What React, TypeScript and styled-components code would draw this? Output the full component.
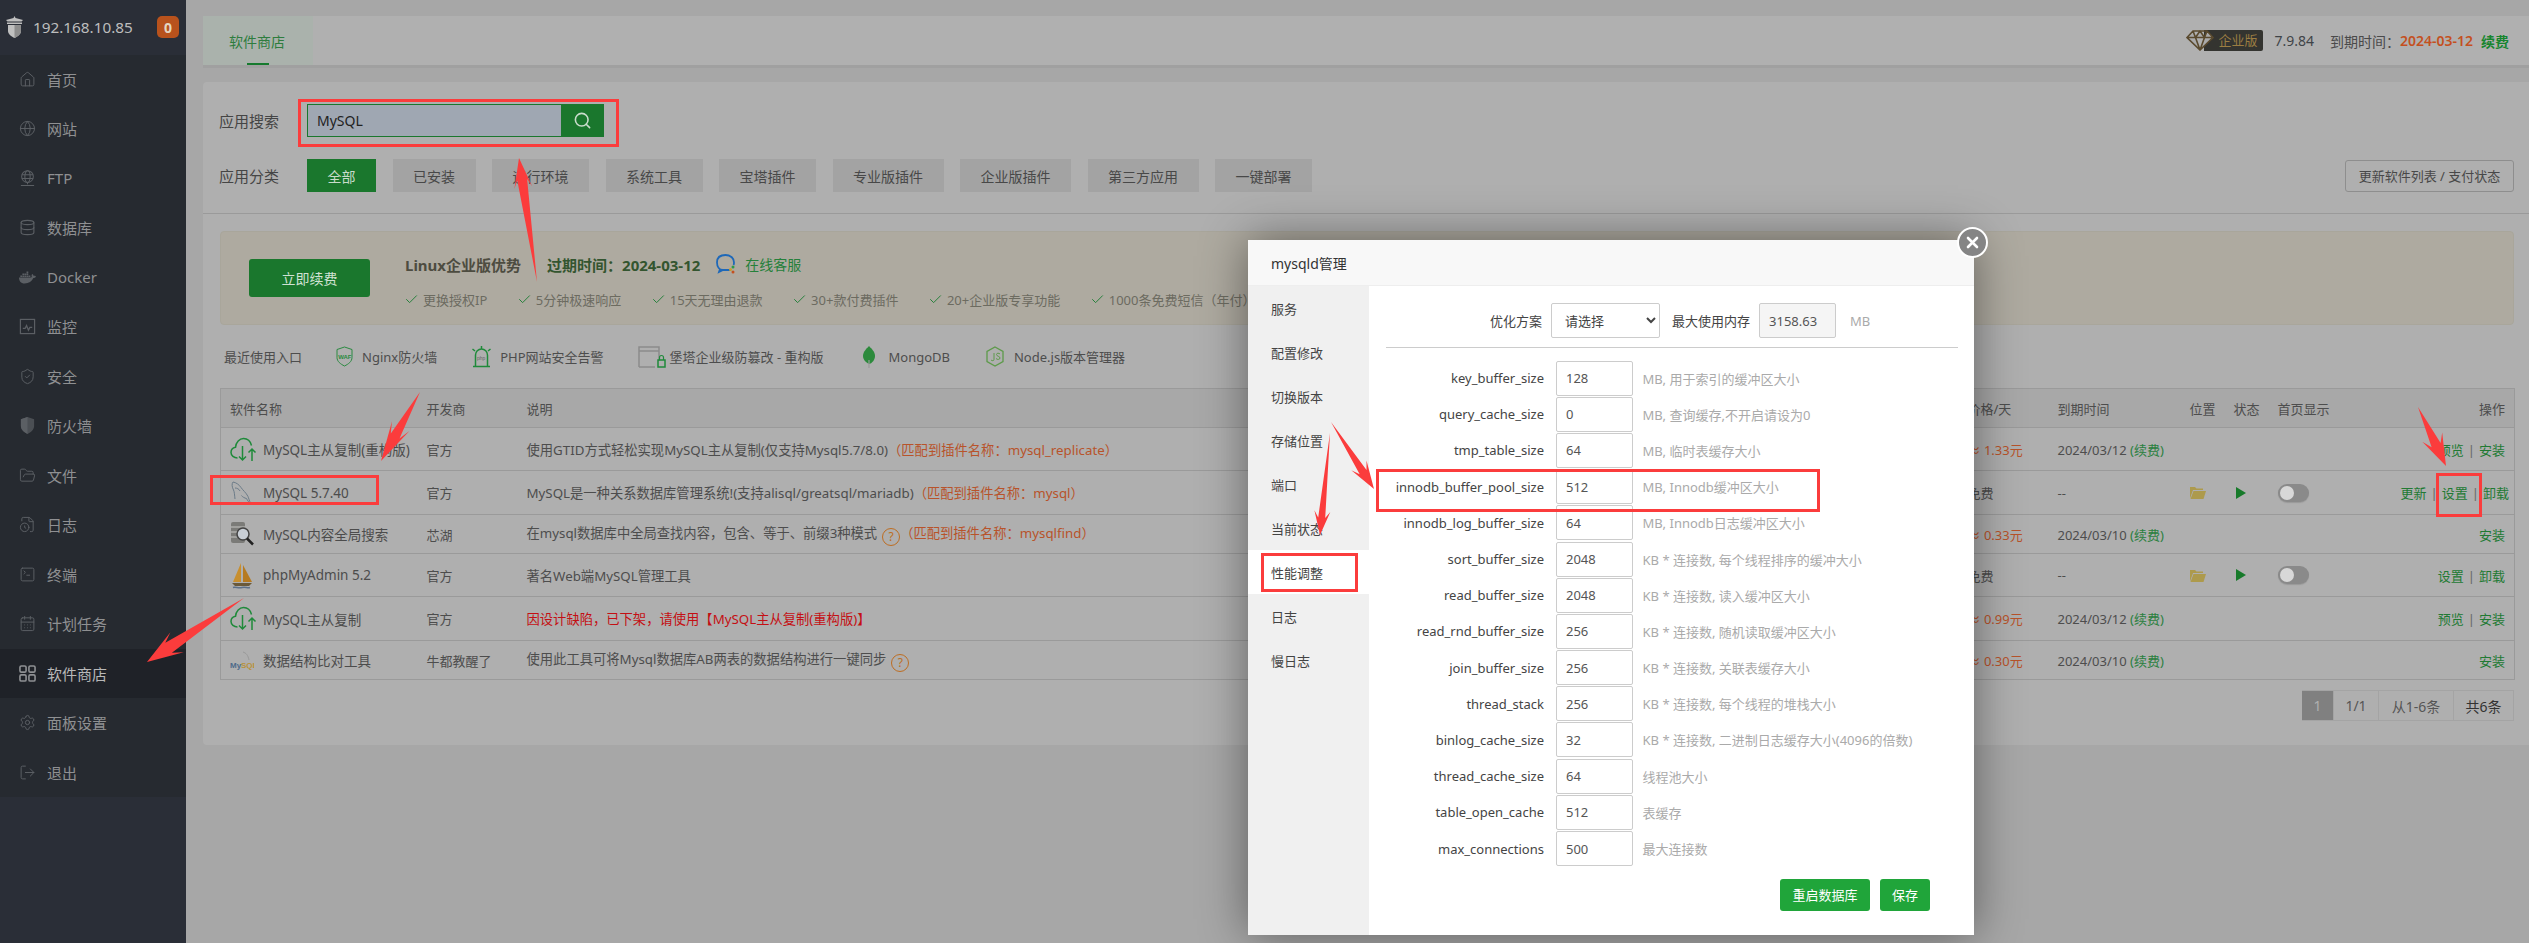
import React from "react";
import styled, { createGlobalStyle } from "styled-components";
import {
  House, Globe, Database, ShieldCheck, FolderOpen, SquareTerminal, CalendarDays,
  Settings, LogOut, Search, Check, FileClock,
} from "lucide-react";
import { FaDocker } from "react-icons/fa";

const COMMA = "\uFF0C";
const COLON = "\uFF1A";
const LP = "\uFF08";
const RP = "\uFF09";

const Global = createGlobalStyle`
  html, body { margin: 0; padding: 0; width: 2529px; height: 943px; overflow: hidden; background: #a7a7a7; }
  * { box-sizing: border-box; }
  body {
    font-family: "Noto Sans", "Noto Sans CJK SC", "Liberation Sans", sans-serif;
    font-size: 13px;
    color: #4a4a4a;
    text-spacing-trim: space-all;
  }
`;

const Page = styled.div`
  position: relative;
  width: 2529px;
  height: 943px;
  display: flex;
  overflow: hidden;
  background: #a7a7a7;
`;

/* ---------- sidebar ---------- */
const Sidebar = styled.aside`
  width: 186px;
  flex: none;
  background: #2a2e37;
`;
const SideHead = styled.div`
  height: 54.5px;
  padding-left: 5px;
  display: flex;
  align-items: center;
  color: #bdbdbd;
  font-size: 15.300px;
`;
const HeadIp = styled.span`
  margin-left: 9px;
  width: 124px;
  white-space: nowrap;
`;
const HeadBadge = styled.span`
  width: 22px;
  height: 22px;
  border-radius: 5px;
  background: #b8521c;
  color: #e4d6c0;
  font-weight: 700;
  font-size: 14px;
  display: flex;
  align-items: center;
  justify-content: center;
`;
const NavList = styled.nav`
  background: #262a30;
`;
const NavItem = styled.div<{ $active?: boolean }>`
  height: 49.5px;
  padding-left: 19px;
  display: flex;
  align-items: center;
  gap: 11px;
  font-size: 15px;
  color: ${(p) => (p.$active ? "#b8b8b8" : "#8f9092")};
  background: ${(p) => (p.$active ? "#1f2228" : "transparent")};
  svg { width: 17px; height: 17px; flex: none; color: ${(p) => (p.$active ? "#8e9093" : "#5b5f64")}; }
`;

/* ---------- main ---------- */
const Main = styled.main`
  flex: 1;
  min-width: 0;
  padding: 16px 0 0 17px;
`;
const TabBar = styled.header`
  height: 49px;
  background: #b0b0b0;
  border-radius: 4px 0 0 0;
  box-shadow: 0 3px 0 #a0a0a0;
  display: flex;
  align-items: stretch;
  justify-content: space-between;
`;
const Tab = styled.div`
  position: relative;
  width: 110px;
  background: #aab2ac;
  color: #2e7d3e;
  font-size: 14px;
  display: flex;
  align-items: center;
  justify-content: center;
  padding-right: 2px;
  &::after {
    content: "";
    position: absolute;
    left: 44px;
    bottom: 0;
    width: 22px;
    height: 2px;
    background: #167a2e;
  }
`;
const VersionBox = styled.div`
  display: flex;
  align-items: center;
  padding-right: 20px;
  font-size: 14px;
  color: #4a4a4a;
`;
const EditionBadge = styled.span`
  display: flex;
  align-items: center;
  margin-right: 11px;
`;
const EditionText = styled.span`
  height: 21px;
  width: 59px;
  margin-left: -10px;
  padding-left: 14px;
  background: #343430;
  color: #9b7d42;
  font-size: 13px;
  line-height: 21px;
  white-space: nowrap;
  border-radius: 0 2px 2px 0;
`;
const Version = styled.span`
  color: #3f4448;
  margin-right: 16px;
`;
const ExpireDate = styled.strong`
  color: #c4501f;
  font-weight: 600;
  margin-right: 8px;
`;
const RenewLink = styled.span`
  color: #17852f;
  font-weight: 600;
`;

const Card = styled.section`
  margin-top: 17px;
  height: 663px;
  background: #afafaf;
  border-radius: 4px 0 0 4px;
`;
const Filters = styled.div`
  height: 132px;
  padding: 22px 15px 0 16px;
  border-bottom: 1px solid #9a9a9a;
  display: flex;
  flex-direction: column;
  gap: 22px;
`;
const FilterRow = styled.div`
  height: 33px;
  display: flex;
  align-items: center;
`;
const FilterLabel = styled.label`
  width: 88px;
  flex: none;
  font-size: 15px;
  color: #454545;
`;
const SearchBox = styled.div`
  display: flex;
  width: 297px;
  height: 33px;
`;
const SearchInput = styled.input`
  flex: 1;
  min-width: 0;
  border: 1.5px solid #1a772d;
  border-right: 0;
  background: #9fa7b2;
  padding: 0 9px;
  font: inherit;
  font-size: 14px;
  color: #222;
  outline: none;
`;
const SearchButton = styled.button`
  width: 43px;
  border: 0;
  padding: 0;
  background: #1a772d;
  color: #c9dccc;
  display: flex;
  align-items: center;
  justify-content: center;
`;
const CatList = styled.div`
  display: flex;
  gap: 16.5px;
  flex: 1;
`;
const CatButton = styled.button<{ $active?: boolean }>`
  height: 33px;
  padding: 0 20.5px;
  border: 0;
  font: inherit;
  font-size: 14px;
  white-space: nowrap;
  background: ${(p) => (p.$active ? "#1a772d" : "#a3a3a3")};
  color: ${(p) => (p.$active ? "#c8dccb" : "#484848")};
`;
const RefreshButton = styled.button`
  width: 169px;
  height: 32px;
  padding: 0;
  border: 1px solid #8e8e8e;
  border-radius: 3px;
  background: transparent;
  font: inherit;
  font-size: 13px;
  color: #484848;
  white-space: nowrap;
`;
const Content = styled.div`
  padding: 17px 15px 0 17px;
`;
const Banner = styled.div`
  height: 94px;
  padding-left: 28px;
  border: 1px solid #a9a69b;
  border-radius: 4px;
  background: #aeaaa0;
  display: flex;
  align-items: center;
  gap: 34px;
`;
const RenewButton = styled.div`
  width: 121px;
  height: 38px;
  border-radius: 3px;
  background: #1a772d;
  color: #d0e2d3;
  font-size: 14px;
  display: flex;
  align-items: center;
  justify-content: center;
`;
const BannerBody = styled.div`
  display: flex;
  flex-direction: column;
  gap: 15px;
  margin-top: 7px;
`;
const BannerTitle = styled.div`
  height: 20px;
  padding-left: 1px;
  display: flex;
  align-items: center;
  font-size: 15px;
  font-weight: 700;
  color: #4d4c40;
`;
const ExpireTitle = styled.span`
  margin: 0 16px 0 26px;
  color: #33552f;
`;
const OnlineLink = styled.span`
  margin-left: 8px;
  font-size: 14px;
  font-weight: 400;
  color: #25803a;
`;
const Features = styled.div`
  display: flex;
  gap: 29.5px;
  height: 20px;
`;
const Feature = styled.span`
  display: flex;
  align-items: center;
  gap: 4px;
  font-size: 13px;
  color: #6c6b60;
  white-space: nowrap;
  svg { color: #27803c; width: 15px; height: 15px; flex: none; }
`;
const QuickRow = styled.div`
  height: 63px;
  padding-left: 4px;
  display: flex;
  align-items: center;
  gap: 34px;
  font-size: 13px;
  color: #4d4d4d;
`;
const QuickItem = styled.span<{ $gap: number; $before?: number }>`
  display: flex;
  align-items: center;
  gap: ${(p) => p.$gap}px;
  margin-left: ${(p) => p.$before ?? 0}px;
  white-space: nowrap;
`;

const Table = styled.table`
  width: 100%;
  table-layout: fixed;
  border-collapse: collapse;
  border: 1px solid #9a9a9a;
`;
const HeadRow = styled.tr`
  height: 39px;
  background: #a8a8a8;
`;
const Row = styled.tr<{ $h: number }>`
  height: ${(p) => p.$h}px;
`;
const Th = styled.th<{ $right?: boolean }>`
  padding: 0 9px;
  font-weight: 400;
  font-size: 13px;
  color: #4d4d4d;
  text-align: ${(p) => (p.$right ? "right" : "left")};
  border-bottom: 1px solid #9a9a9a;
`;
const Td = styled.td<{ $right?: boolean; $desc?: boolean }>`
  padding: 0 9px;
  padding-left: ${(p) => (p.$right ? "0" : "9px")};
  font-size: ${(p) => (p.$desc ? "13.300px" : "13px")};
  color: #4d4d4d;
  white-space: nowrap;
  text-align: ${(p) => (p.$right ? "right" : "left")};
  border-bottom: 1px solid #9a9a9a;
`;
const NameCell = styled.div`
  display: flex;
  align-items: center;
  font-size: 13.500px;
  color: #4c4c4c;
`;
const NameIcon = styled.span`
  width: 33px;
  flex: none;
  display: flex;
  align-items: center;
`;
const Plugin = styled.span`
  color: #b8532a;
`;
const Danger = styled.span`
  color: #c40f14;
`;
const HelpIcon = styled.span`
  display: inline-flex;
  align-items: center;
  justify-content: center;
  width: 18px;
  height: 18px;
  margin-left: 5px;
  border: 1px solid #bd6d22;
  border-radius: 50%;
  color: #bd6d22;
  font-size: 12px;
  line-height: 1;
  vertical-align: -3px;
`;
const Price = styled.span`
  color: #b8532a;
`;
const Renew = styled.span`
  color: #2a8040;
`;
const ActionLink = styled.span`
  color: #217a33;
`;
const ActionSep = styled.span`
  color: #666;
  margin: 0 4px;
`;
const Toggle = styled.span`
  display: block;
  position: relative;
  width: 31px;
  height: 18px;
  border-radius: 9px;
  background: #8a8a8a;
  box-shadow: 0 1px 1px #9a9a9a;
  &::after {
    content: "";
    position: absolute;
    left: 2px;
    top: 2px;
    width: 14px;
    height: 14px;
    border-radius: 50%;
    background: #d8d8d8;
  }
`;
const Pager = styled.div`
  margin-top: 10px;
  display: flex;
  justify-content: flex-end;
  height: 31px;
`;
const PageCell = styled.span<{ $w: number; $active?: boolean; $strong?: boolean }>`
  width: ${(p) => p.$w}px;
  display: flex;
  align-items: center;
  justify-content: center;
  font-size: 14px;
  border: 1px solid #a4a4a4;
  border-left: 0;
  background: ${(p) => (p.$active ? "#808080" : "transparent")};
  color: ${(p) => (p.$active ? "#b0b0b0" : p.$strong ? "#333" : "#555")};
`;

/* ---------- modal ---------- */
const Modal = styled.div`
  position: absolute;
  left: 1248px;
  top: 240px;
  width: 726px;
  height: 695px;
  background: #fff;
  box-shadow: 0 0 45px rgba(0, 0, 0, 0.45);
  display: flex;
  flex-direction: column;
`;
const CloseButton = styled.span`
  position: absolute;
  top: -13px;
  right: -14px;
  width: 31px;
  height: 31px;
  border-radius: 50%;
  border: 2.5px solid #fff;
  background: #858585;
  display: flex;
  align-items: center;
  justify-content: center;
`;
const ModalHead = styled.div`
  height: 46px;
  padding-left: 23px;
  background: #f8f8f8;
  border-bottom: 1px solid #eee;
  display: flex;
  align-items: center;
  font-size: 14px;
  color: #333;
`;
const ModalBody = styled.div`
  flex: 1;
  display: flex;
  min-height: 0;
`;
const ModalMenu = styled.div`
  width: 121px;
  flex: none;
  background: #f0f0f0;
`;
const ModalMenuItem = styled.div<{ $active?: boolean }>`
  height: 44px;
  padding-left: 23px;
  display: flex;
  align-items: center;
  font-size: 13px;
  color: #444;
  background: ${(p) => (p.$active ? "#fff" : "transparent")};
`;
const ModalContent = styled.div`
  flex: 1;
  min-width: 0;
  padding: 17px 16px 0 17px;
`;
const TopForm = styled.div`
  height: 35px;
  padding-left: 104px;
  display: flex;
  align-items: center;
  font-size: 13px;
  color: #444;
  white-space: nowrap;
`;
const Select = styled.select`
  width: 109px;
  height: 35px;
  margin: 0 12px 0 9px;
  padding: 0 9px;
  border: 1px solid #ccc;
  border-radius: 2px;
  background: #fff;
  font: inherit;
  font-size: 13px;
  color: #444;
`;
const MaxMem = styled.input`
  width: 77px;
  height: 35px;
  margin: 0 14px 0 9px;
  padding: 0 9px;
  border: 1px solid #ccc;
  border-radius: 2px;
  background: #f5f5f5;
  font: inherit;
  font-size: 13px;
  color: #555;
`;
const Unit = styled.span`
  color: #aaa;
`;
const ModalRule = styled.hr`
  margin: 9px 0 12px;
  border: 0;
  border-top: 1px solid #ccc;
`;
const ParamRow = styled.div`
  height: 36.2px;
  display: flex;
  align-items: center;
  font-size: 13px;
`;
const ParamLabel = styled.label`
  width: 158px;
  flex: none;
  text-align: right;
  color: #444;
  white-space: nowrap;
`;
const ParamInput = styled.input`
  width: 77px;
  height: 35px;
  flex: none;
  margin: 0 9.5px 0 12px;
  padding: 0 9px;
  border: 1px solid #ccc;
  border-radius: 2px;
  font: inherit;
  font-size: 13px;
  color: #555;
  background: #fff;
`;
const ParamHint = styled.span`
  color: #aaa;
  white-space: nowrap;
`;
const ModalActions = styled.div`
  margin-top: 12px;
  padding-right: 28px;
  display: flex;
  justify-content: flex-end;
  gap: 10px;
`;
const PrimaryButton = styled.button<{ $w: number }>`
  width: ${(p) => p.$w}px;
  height: 32px;
  padding: 0;
  border: 0;
  border-radius: 3px;
  background: #20a53a;
  color: #fff;
  font: inherit;
  font-size: 13px;
  white-space: nowrap;
`;
const Annotations = styled.svg`
  position: absolute;
  left: 0;
  top: 0;
  pointer-events: none;
`;

/* ---------- icons ---------- */
const LogoIcon = () => (
  <svg width="19" height="22" viewBox="0 0 19 22" fill="#bfbfbf">
    <path d="M9.5 0l1 2 7.5 2-1.5 1.5h-14L1 4l7.500-2z" />
    <path d="M2 6.500h15v1.500H2z" />
    <path d="M3 9h13v6c0 3.500-3.500 5.500-6.500 7C6.500 20.500 3 18.500 3 15z" />
    <path d="M9.500 9h6.500v6c0 3.500-3.500 5.500-6.500 7z" fill="#8d8d8d" />
  </svg>
);
const FtpIcon = () => (
  <svg viewBox="0 0 18 18" fill="none" stroke="currentColor" strokeWidth="1.100">
    <circle cx="9" cy="7" r="6.200" />
    <ellipse cx="9" cy="7" rx="2.800" ry="6.200" />
    <path d="M3 5h12M3 9h12M9 13.200v2M2 16.500h14" />
  </svg>
);
const MonitorIcon = () => (
  <svg viewBox="0 0 18 18" fill="none" stroke="currentColor" strokeWidth="1.300">
    <rect x="1.500" y="1.500" width="15" height="15" />
    <path d="M4 11h2.500l1.500-3 2 5 1.500-3H14" />
  </svg>
);
const HalfShieldIcon = () => (
  <svg viewBox="0 0 18 18" fill="currentColor">
    <path d="M9 0l7 2.500v7c0 4-3.500 6.500-7 8.500-3.500-2-7-4.500-7-8.500v-7z" opacity=".7" />
    <path d="M9 0v18c-3.500-2-7-4.500-7-8.500v-7z" />
  </svg>
);
const GridIcon = () => (
  <svg viewBox="0 0 18 18" fill="none" stroke="currentColor" strokeWidth="1.700">
    <rect x="1" y="1" width="6.500" height="6.500" rx="1.500" />
    <rect x="10.500" y="1" width="6.500" height="6.500" rx="1.500" />
    <rect x="1" y="10.500" width="6.500" height="6.500" rx="1.500" />
    <rect x="10.500" y="10.500" width="6.500" height="6.500" rx="1.500" />
  </svg>
);
const DiamondIcon = () => (
  <svg width="28" height="21" viewBox="0 0 28 21" fill="none" stroke="#5a4a2e" strokeWidth="1.600" style={{ position: "relative", zIndex: 1 }}>
    <path d="M7 1h14l6 6.500L14 20 1 7.500zM1 7.500h26M9.500 7.500L14 20l4.500-12.500M7 1l2.500 6.500L14 1l4.500 6.500L21 1" fill="#aaa" />
  </svg>
);
const CloudIcon = () => (
  <svg width="27" height="25" viewBox="0 0 27 25" fill="none" stroke="#1f8a3a" strokeWidth="1.500">
    <path d="M7.500 21C4 21 1 18.500 1 15.500c0-2.800 2-4.800 4.500-5.200C6 5.500 9.500 1.500 13.500 1.500c4 0 7 3 8 7" />
    <path d="M12.500 9v14M9 19.500l3.500 3.500 3.500-3.500M22 24V12M18.500 15.500L22 12l3.500 3.500" />
  </svg>
);
const DolphinIcon = () => (
  <svg width="22" height="24" viewBox="0 0 22 24" fill="none" stroke="#6c7b88" strokeWidth="1">
    <path d="M3 1c-1.500 2-1 5 .5 8 1 2 1 5 1.500 9M3 1c3 .5 6 2.500 8 5.500 2 3 5 5 7 9 .5 1.500 1.500 4 2.500 7-2-1.500-3-3-4-5-2-.5-4-1.500-5-3" />
    <path d="M5 7c2 0 4 1 5 3" />
  </svg>
);
const SearchDbIcon = () => (
  <svg width="25" height="26" viewBox="0 0 25 26">
    <rect x="1" y="1" width="14" height="21" rx="2" fill="#7b7b78" />
    <path d="M1 6h14M1 11h14M1 16h14" stroke="#c8c8c4" strokeWidth="1" />
    <circle cx="13" cy="13" r="6" fill="#c9cfd6" stroke="#444" strokeWidth="1.500" />
    <path d="M17 17.500l6 6" stroke="#222" strokeWidth="2.500" />
  </svg>
);
const BoatIcon = () => (
  <svg width="24" height="27" viewBox="0 0 24 27">
    <path d="M11 1L3 20h8z" fill="#c88f2e" />
    <path d="M13 3l9 17h-9z" fill="#b67a20" />
    <path d="M2 21h20l-3 3H5z" fill="#6b5a3a" />
    <path d="M3 25.500c3-1 5 1 9 0s5 1 8 0" stroke="#5d7088" strokeWidth="1.500" fill="none" />
  </svg>
);
const SmallMysqlIcon = () => (
  <svg width="24" height="22" viewBox="0 0 24 22">
    <path d="M13 3c3 1 5 3 6 8" fill="none" stroke="#999" strokeWidth="1" />
    <text x="0" y="19" fontSize="8" fontWeight="700" fontFamily="Liberation Sans, sans-serif" fill="#4c6a8a">My</text>
    <text x="11" y="19" fontSize="8" fontWeight="700" fontFamily="Liberation Sans, sans-serif" fill="#b8913a">SQL</text>
  </svg>
);
const WafIcon = () => (
  <svg width="17" height="21" viewBox="0 0 17 21" fill="none" stroke="#2a8a40" strokeWidth="1">
    <path d="M8.500 1L16 3.500v8c0 4-3.500 6.500-7.500 8.500C4.500 18 1 15.500 1 11.500v-8z" />
    <text x="2.200" y="12.500" fontSize="6" fontWeight="700" fontFamily="Liberation Sans, sans-serif" fill="#2a8a40" stroke="none">WAF</text>
  </svg>
);
const AlarmIcon = () => (
  <svg width="21" height="23" viewBox="0 0 21 23" fill="none" stroke="#1f8a3a" strokeWidth="1.500">
    <path d="M4.500 21V10a6 6 0 0 1 12 0v11M2 21.500h17M10.500 1v2.500M1.500 4l2.500 2M19.500 4l-2.500 2" />
    <text x="6" y="15" fontSize="5" fontFamily="Liberation Sans, sans-serif" fill="#666" stroke="none">php</text>
  </svg>
);
const BrowserLockIcon = () => (
  <svg width="28" height="24" viewBox="0 0 28 24" fill="none">
    <path d="M1 22V2h20v14M1 6h20M1 22h16" stroke="#8c8c8c" strokeWidth="1.500" />
    <rect x="20" y="15" width="7" height="7" stroke="#1f8a3a" strokeWidth="1.500" />
    <path d="M21.500 15v-2.500a2 2 0 0 1 4 0V15" stroke="#1f8a3a" strokeWidth="1.200" />
  </svg>
);
const LeafIcon = () => (
  <svg width="12" height="22" viewBox="0 0 12 22">
    <path d="M6 0c3 3 6 6 6 10 0 4-3 7-5.500 8-3-1-6.500-4-6.500-8C0 6 3 3 6 0z" fill="#2c8a3c" />
    <path d="M6 14v8" stroke="#9a9a9a" strokeWidth="1.200" />
  </svg>
);
const NodeIcon = () => (
  <svg width="18" height="21" viewBox="0 0 18 21" fill="none" stroke="#5d9a4a" strokeWidth="1.300">
    <path d="M9 1l8 4.500v10L9 20l-8-4.500v-10z" />
    <path d="M8 7v6.500c0 1.500-2 1.500-3 .5M14 8c-1-1.200-3.500-1-3.500.5 0 2 3.500 1.500 3.500 3.500 0 1.800-3 1.800-4 .5" strokeWidth="1" />
  </svg>
);
const ChatIcon = () => (
  <svg width="21" height="20" viewBox="0 0 21 20" fill="none">
    <path d="M15 16H7c-3.500 0-6-3-6-7.500S4 1 9.500 1 18 4.500 18 8.500c0 1-.2 2-.5 2.500M4 15l-1 3 4-2" stroke="#1e68b8" strokeWidth="1.800" />
    <circle cx="17" cy="13" r="1.500" fill="#2f9a4a" />
    <circle cx="14.500" cy="15.500" r="1.500" fill="#c9a02a" />
    <circle cx="17" cy="18" r="1.500" fill="#c4501f" />
  </svg>
);
const FolderIcon = () => (
  <svg width="16" height="13" viewBox="0 0 16 13" fill="#ad9a4c" style={{ display: "block" }}>
    <path d="M0 2.500V1h5l1.500 1.500H13V4H3L0 12.500z" />
    <path d="M3.500 5H16l-2.500 8H.5z" />
  </svg>
);
const PlayIcon = () => (
  <svg width="10" height="12" viewBox="0 0 10 12" fill="#177a2a" style={{ display: "block", marginLeft: "2px" }}>
    <path d="M0 0l10 6-10 6z" />
  </svg>
);
const CloseIcon = () => (
  <svg width="13" height="13" viewBox="0 0 13 13" stroke="#fff" strokeWidth="2.600" strokeLinecap="round">
    <path d="M2 2l9 9M11 2l-9 9" />
  </svg>
);

const arrowPoints = (tx: number, ty: number, hx: number, hy: number, head: number, wing: number, neck: number) => {
  const len = Math.hypot(hx - tx, hy - ty);
  const ux = (hx - tx) / len;
  const uy = (hy - ty) / len;
  const nx = -uy;
  const ny = ux;
  const bx = hx - ux * head;
  const by = hy - uy * head;
  const nk = hx - ux * head * 0.72;
  const nl = hy - uy * head * 0.72;
  const pts = [
    [tx, ty],
    [nk + nx * neck, nl + ny * neck],
    [bx + nx * wing, by + ny * wing],
    [hx, hy],
    [bx - nx * wing, by - ny * wing],
    [nk - nx * neck, nl - ny * neck],
  ];
  return pts.map((p) => p.map((v) => v.toFixed(1)).join(",")).join(" ");
};

/* ---------- data ---------- */
const navItems: [string, React.ReactNode][] = [
  ["首页", <House key="a" strokeWidth={1.4} />],
  ["网站", <Globe key="b" strokeWidth={1.4} />],
  ["FTP", <FtpIcon key="c" />],
  ["数据库", <Database key="d" strokeWidth={1.6} />],
  ["Docker", <FaDocker key="e" />],
  ["监控", <MonitorIcon key="f" />],
  ["安全", <ShieldCheck key="g" strokeWidth={1.4} />],
  ["防火墙", <HalfShieldIcon key="h" />],
  ["文件", <FolderOpen key="i" strokeWidth={1.4} />],
  ["日志", <FileClock key="j" strokeWidth={1.4} />],
  ["终端", <SquareTerminal key="k" strokeWidth={1.4} />],
  ["计划任务", <CalendarDays key="l" strokeWidth={1.4} />],
  ["软件商店", <GridIcon key="m" />],
  ["面板设置", <Settings key="n" strokeWidth={1.4} />],
  ["退出", <LogOut key="o" strokeWidth={1.4} />],
];
const categories = ["全部", "已安装", "运行环境", "系统工具", "宝塔插件", "专业版插件", "企业版插件", "第三方应用", "一键部署"];
const features = ["更换授权IP", "5分钟极速响应", "15天无理由退款", "30+款付费插件", "20+企业版专享功能", `1000条免费短信${LP}年付${RP}`];

type SoftRow = {
  h: number;
  icon: React.ReactNode;
  name: string;
  dev: string;
  desc: React.ReactNode;
  price: string;
  expire: string;
  installed?: boolean;
  actions: string[];
};
const pluginNote = (n: string) => `${LP}匹配到插件名称${COLON}${n}${RP}`;
const rows: SoftRow[] = [
  {
    h: 43, icon: <CloudIcon />, name: "MySQL主从复制(重构版)", dev: "官方",
    desc: <>使用GTID方式轻松实现MySQL主从复制(仅支持Mysql5.7/8.0)<Plugin>{pluginNote("mysql_replicate")}</Plugin></>,
    price: "≈ 1.33元", expire: "2024/03/12", actions: ["预览", "安装"],
  },
  {
    h: 44, icon: <DolphinIcon />, name: "MySQL 5.7.40", dev: "官方",
    desc: <>MySQL是一种关系数据库管理系统!(支持alisql/greatsql/mariadb)<Plugin>{pluginNote("mysql")}</Plugin></>,
    price: "免费", expire: "--", installed: true, actions: ["更新", "设置", "卸载"],
  },
  {
    h: 39, icon: <SearchDbIcon />, name: "MySQL内容全局搜索", dev: "芯湖",
    desc: <>{`在mysql数据库中全局查找内容${COMMA}包含、等于、前缀3种模式`}<HelpIcon>?</HelpIcon><Plugin>{pluginNote("mysqlfind")}</Plugin></>,
    price: "≈ 0.33元", expire: "2024/03/10", actions: ["安装"],
  },
  {
    h: 43, icon: <BoatIcon />, name: "phpMyAdmin 5.2", dev: "官方",
    desc: <>著名Web端MySQL管理工具</>,
    price: "免费", expire: "--", installed: true, actions: ["设置", "卸载"],
  },
  {
    h: 44, icon: <CloudIcon />, name: "MySQL主从复制", dev: "官方",
    desc: <Danger>{`因设计缺陷${COMMA}已下架${COMMA}请使用【MySQL主从复制(重构版)】`}</Danger>,
    price: "≈ 0.99元", expire: "2024/03/12", actions: ["预览", "安装"],
  },
  {
    h: 39, icon: <SmallMysqlIcon />, name: "数据结构比对工具", dev: "牛都教醒了",
    desc: <>使用此工具可将Mysql数据库AB两表的数据结构进行一键同步<HelpIcon>?</HelpIcon></>,
    price: "≈ 0.30元", expire: "2024/03/10", actions: ["安装"],
  },
];
const columns = [197, 100, 1441, 90, 132, 44, 44, 132, 114];
const menuItems = ["服务", "配置修改", "切换版本", "存储位置", "端口", "当前状态", "性能调整", "日志", "慢日志"];
const params: [string, string, string][] = [
  ["key_buffer_size", "128", "MB, 用于索引的缓冲区大小"],
  ["query_cache_size", "0", "MB, 查询缓存,不开启请设为0"],
  ["tmp_table_size", "64", "MB, 临时表缓存大小"],
  ["innodb_buffer_pool_size", "512", "MB, Innodb缓冲区大小"],
  ["innodb_log_buffer_size", "64", "MB, Innodb日志缓冲区大小"],
  ["sort_buffer_size", "2048", "KB * 连接数, 每个线程排序的缓冲大小"],
  ["read_buffer_size", "2048", "KB * 连接数, 读入缓冲区大小"],
  ["read_rnd_buffer_size", "256", "KB * 连接数, 随机读取缓冲区大小"],
  ["join_buffer_size", "256", "KB * 连接数, 关联表缓存大小"],
  ["thread_stack", "256", "KB * 连接数, 每个线程的堆栈大小"],
  ["binlog_cache_size", "32", "KB * 连接数, 二进制日志缓存大小(4096的倍数)"],
  ["thread_cache_size", "64", "线程池大小"],
  ["table_open_cache", "512", "表缓存"],
  ["max_connections", "500", "最大连接数"],
];
const redBoxes = [
  [298, 99, 321, 48],
  [210, 475, 169, 30],
  [2436, 473, 46, 44],
  [1261, 553, 97, 39],
  [1376, 469, 444, 43],
];
const arrows = [
  [537, 282, 519, 158, 30, 9, 5],
  [420, 392, 381, 461, 40, 10, 5],
  [244, 598, 147, 662, 36, 12, 6],
  [1330, 433, 1320, 535, 24, 8, 3.5],
  [1331, 422, 1374, 489, 28, 9, 4],
  [2418, 407, 2446, 466, 32, 11, 5],
] as const;

export default function App() {
  return (
    <Page>
      <Global />
      <Sidebar>
        <SideHead>
          <LogoIcon />
          <HeadIp>192.168.10.85</HeadIp>
          <HeadBadge>0</HeadBadge>
        </SideHead>
        <NavList>
          {navItems.map(([label, icon]) => (
            <NavItem key={label} $active={label === "软件商店"}>
              {icon}
              <span>{label}</span>
            </NavItem>
          ))}
        </NavList>
      </Sidebar>

      <Main>
        <TabBar>
          <Tab>软件商店</Tab>
          <VersionBox>
            <EditionBadge>
              <DiamondIcon />
              <EditionText>企业版</EditionText>
            </EditionBadge>
            <Version>7.9.84</Version>
            <span>{`到期时间${COLON}`}</span>
            <ExpireDate>2024-03-12</ExpireDate>
            <RenewLink>续费</RenewLink>
          </VersionBox>
        </TabBar>

        <Card>
          <Filters>
            <FilterRow>
              <FilterLabel>应用搜索</FilterLabel>
              <SearchBox>
                <SearchInput defaultValue="MySQL" />
                <SearchButton aria-label="搜索"><Search size={19} strokeWidth={2} /></SearchButton>
              </SearchBox>
            </FilterRow>
            <FilterRow>
              <FilterLabel>应用分类</FilterLabel>
              <CatList>
                {categories.map((c, i) => (
                  <CatButton key={c} $active={i === 0}>{c}</CatButton>
                ))}
              </CatList>
              <RefreshButton>更新软件列表 / 支付状态</RefreshButton>
            </FilterRow>
          </Filters>

          <Content>
            <Banner>
              <RenewButton>立即续费</RenewButton>
              <BannerBody>
                <BannerTitle>
                  <span>Linux企业版优势</span>
                  <ExpireTitle>{`过期时间${COLON}2024-03-12`}</ExpireTitle>
                  <ChatIcon />
                  <OnlineLink>在线客服</OnlineLink>
                </BannerTitle>
                <Features>
                  {features.map((f) => (
                    <Feature key={f}><Check strokeWidth={1.6} />{f}</Feature>
                  ))}
                </Features>
              </BannerBody>
            </Banner>

            <QuickRow>
              <span>最近使用入口</span>
              <QuickItem $gap={9}><WafIcon />Nginx防火墙</QuickItem>
              <QuickItem $gap={8}><AlarmIcon />PHP网站安全告警</QuickItem>
              <QuickItem $gap={4}><BrowserLockIcon />堡塔企业级防篡改 - 重构版</QuickItem>
              <QuickItem $gap={13} $before={6}><LeafIcon />MongoDB</QuickItem>
              <QuickItem $gap={10} $before={2}><NodeIcon />Node.js版本管理器</QuickItem>
            </QuickRow>

            <Table>
              <colgroup>
                {columns.map((w, i) => <col key={i} style={{ width: w }} />)}
              </colgroup>
              <thead>
                <HeadRow>
                  <Th>软件名称</Th>
                  <Th>开发商</Th>
                  <Th>说明</Th>
                  <Th>价格/天</Th>
                  <Th>到期时间</Th>
                  <Th>位置</Th>
                  <Th>状态</Th>
                  <Th>首页显示</Th>
                  <Th $right>操作</Th>
                </HeadRow>
              </thead>
              <tbody>
                {rows.map((r) => (
                  <Row key={r.name} $h={r.h}>
                    <Td>
                      <NameCell>
                        <NameIcon>{r.icon}</NameIcon>
                        {r.name}
                      </NameCell>
                    </Td>
                    <Td>{r.dev}</Td>
                    <Td $desc>{r.desc}</Td>
                    <Td>{r.price === "免费" ? r.price : <Price>{r.price}</Price>}</Td>
                    <Td>
                      {r.expire}
                      {r.expire !== "--" && <Renew> (续费)</Renew>}
                    </Td>
                    <Td>{r.installed && <FolderIcon />}</Td>
                    <Td>{r.installed && <PlayIcon />}</Td>
                    <Td>{r.installed && <Toggle />}</Td>
                    <Td $right>
                      {r.actions.map((a, i) => (
                        <React.Fragment key={a}>
                          {i > 0 && <ActionSep>|</ActionSep>}
                          <ActionLink>{a}</ActionLink>
                        </React.Fragment>
                      ))}
                    </Td>
                  </Row>
                ))}
              </tbody>
            </Table>

            <Pager>
              <PageCell $w={32} $active>1</PageCell>
              <PageCell $w={45}>1/1</PageCell>
              <PageCell $w={75}>从1-6条</PageCell>
              <PageCell $w={60} $strong>共6条</PageCell>
            </Pager>
          </Content>
        </Card>
      </Main>

      <Modal>
        <CloseButton><CloseIcon /></CloseButton>
        <ModalHead>mysqld管理</ModalHead>
        <ModalBody>
          <ModalMenu>
            {menuItems.map((m) => (
              <ModalMenuItem key={m} $active={m === "性能调整"}>{m}</ModalMenuItem>
            ))}
          </ModalMenu>
          <ModalContent>
            <TopForm>
              <span>优化方案</span>
              <Select defaultValue="">
                <option value="">请选择</option>
              </Select>
              <span>最大使用内存</span>
              <MaxMem readOnly value="3158.63" />
              <Unit>MB</Unit>
            </TopForm>
            <ModalRule />
            {params.map(([name, value, hint]) => (
              <ParamRow key={name}>
                <ParamLabel>{name}</ParamLabel>
                <ParamInput readOnly value={value} />
                <ParamHint>{hint}</ParamHint>
              </ParamRow>
            ))}
            <ModalActions>
              <PrimaryButton $w={90}>重启数据库</PrimaryButton>
              <PrimaryButton $w={50}>保存</PrimaryButton>
            </ModalActions>
          </ModalContent>
        </ModalBody>
      </Modal>

      <Annotations width="2529" height="943" viewBox="0 0 2529 943">
        {redBoxes.map(([x, y, w, h], i) => (
          <rect key={i} x={x + 1.5} y={y + 1.5} width={w - 3} height={h - 3} fill="none" stroke="#fb3c3c" strokeWidth="3" />
        ))}
        {arrows.map((a, i) => (
          <polygon key={i} points={arrowPoints(a[0], a[1], a[2], a[3], a[4], a[5], a[6])} fill="#fb3c3c" />
        ))}
      </Annotations>
    </Page>
  );
}
